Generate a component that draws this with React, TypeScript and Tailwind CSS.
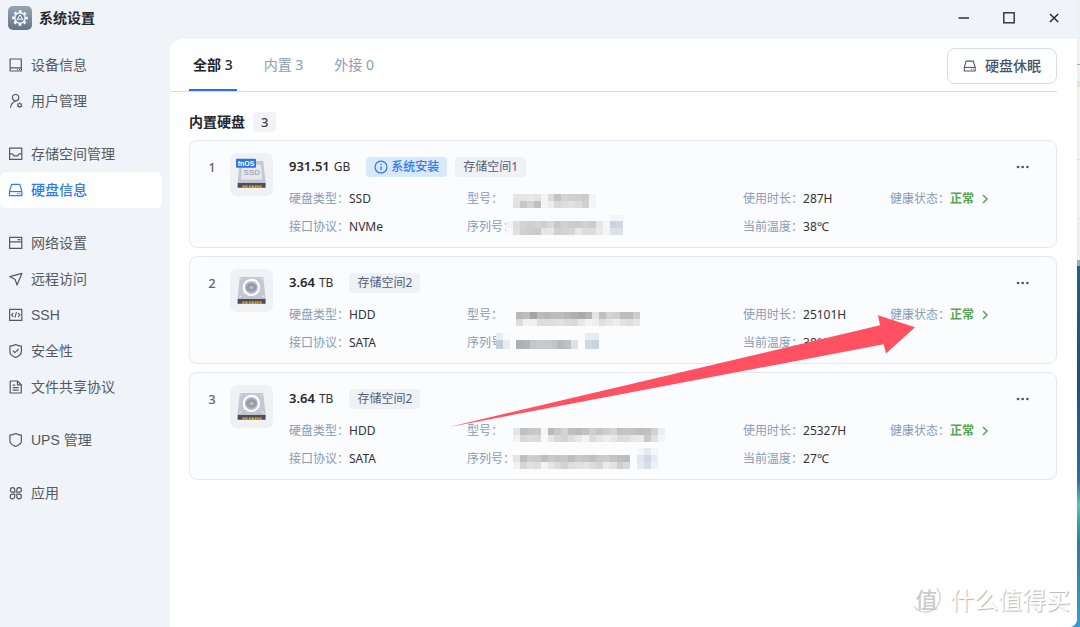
import type { ReactNode } from "react";

function Icon({ children, className = "size-4" }: { children: ReactNode; className?: string }) {
  return (
    <svg
      viewBox="0 0 16 16"
      className={`shrink-0 ${className}`}
      fill="none"
      stroke="currentColor"
      strokeWidth="1.2"
      strokeLinejoin="round"
      aria-hidden="true"
    >
      {children}
    </svg>
  );
}

const shieldPath = "M7.6 1.6 C9.4 2.6 11.5 3.1 13.4 3.1 V8.4 C13.4 11.3 11 13.2 7.6 14.4 C4.2 13.2 1.9 11.3 1.9 8.4 V3.1 C3.8 3.1 5.9 2.6 7.6 1.6Z";

const drivePaths = (
  <>
    <path d="M3.6 2.4H11.8L13.9 9.4V13.6H1.5V9.4Z" />
    <path d="M1.5 9.6H13.9" />
    <path d="M9.2 11.7H10.2M11.2 11.7H12.2" />
  </>
);

const icons: Record<string, ReactNode> = {
  device: (
    <>
      <rect x="2.1" y="2" width="11.2" height="12" />
      <path d="M2.1 10.9H13.3M9 12.5H10M11 12.5H12" />
    </>
  ),
  user: (
    <>
      <circle cx="7.6" cy="4.7" r="3.2" />
      <path d="M2.6 14.7C2.8 11.6 4.4 9.3 7.6 8.3" />
      <circle cx="11.6" cy="12.2" r="1.7" />
      <path d="M11.6 9.6V10.4M11.6 14V14.8M9.3 10.9L10 11.3M13.2 13.1L13.9 13.5M9.3 13.5L10 13.1M13.2 11.3L13.9 10.9" />
    </>
  ),
  storage: (
    <>
      <rect x="1.6" y="2.2" width="12.2" height="11.2" />
      <path d="M1.6 7.8H4.4L6 9.8H9.6L11.2 7.8H13.8" />
    </>
  ),
  drive: drivePaths,
  network: (
    <>
      <rect x="1.6" y="2.4" width="12.2" height="11" />
      <path d="M1.6 6.9H13.8M9.6 4.6H12.4" />
    </>
  ),
  remote: <path d="M1.8 5.6L13.9 2.4L9 14L7.2 8.6Z" />,
  ssh: (
    <>
      <rect x="1.6" y="2.4" width="12.2" height="11" />
      <path d="M5.3 6L3.5 7.9L5.3 9.8M10.1 6L11.9 7.9L10.1 9.8M8.5 5.2L6.9 10.6" strokeWidth="1.1" />
    </>
  ),
  security: (
    <>
      <path d={shieldPath} />
      <path d="M4.9 7.7L6.9 9.7L10.6 6" />
    </>
  ),
  files: (
    <>
      <path d="M2.2 2H9.4L13.3 5.8V14H2.2Z" />
      <path d="M9.4 2V5.8H13.3M4.7 6.2H7.2M4.7 8.7H10.7M4.7 11.2H10.7" />
    </>
  ),
  ups: <path d={shieldPath} />,
  apps: (
    <>
      <path d="M6.8 7.2H4.5A2.2 2.3 0 1 1 6.8 4.7ZM8.8 7.2V4.7A2.3 2.3 0 1 1 11.1 7.2Z" />
      <path d="M6.8 9.2V11.5A2.3 2.3 0 1 1 4.5 9.2ZM8.8 9.2H11.1A2.3 2.3 0 1 1 8.8 11.5Z" />
    </>
  ),
};

const navGroups = [
  [
    { icon: "device", label: "设备信息" },
    { icon: "user", label: "用户管理" },
  ],
  [
    { icon: "storage", label: "存储空间管理" },
    { icon: "drive", label: "硬盘信息", active: true },
  ],
  [
    { icon: "network", label: "网络设置" },
    { icon: "remote", label: "远程访问" },
    { icon: "ssh", label: "SSH" },
    { icon: "security", label: "安全性" },
    { icon: "files", label: "文件共享协议" },
  ],
  [{ icon: "ups", label: "UPS 管理" }],
  [{ icon: "apps", label: "应用" }],
];

type Strip = { x: number; y: number; h?: number; cells: string };

type Disk = {
  size: string;
  unit: string;
  system?: boolean;
  pool: string;
  kind: string;
  bus: string;
  hours: string;
  temp: string;
  mask: Strip[];
};

// Each cell is a two-digit hex grey, or a full six-digit colour.
const disks: Disk[] = [
  {
    size: "931.51", unit: "GB", system: true, pool: "存储空间1", kind: "SSD", bus: "NVMe", hours: "287H", temp: "38℃",
    mask: [
      { x: 46, y: 9, cells: "e5 e5 e8 e4 f4 dc c2 d3 d0 d0 cb f4" },
      { x: 46, y: 16, cells: "e1 c8 d4 c0 f5 ec d9 dd e0 dc d0 f6" },
      { x: 39, y: 36, cells: "f5 dd d3 cf d2 ce d8 c8 d0 cc cb d1 cc e6 f5 c9d1df d0d6e2" },
      { x: 39, y: 43, cells: "f8 e0 d0 cd ca e5 e7 d0 d3 d6 e8 dc dd e9 f4 dce2ec dae1ea" },
      { x: 143, y: 30, h: 6, cells: "f3f5f8 f3f5f8" },
    ],
  },
  {
    size: "3.64", unit: "TB", pool: "存储空间2", kind: "HDD", bus: "SATA", hours: "25101H", temp: "38℃",
    mask: [
      { x: 49, y: 11, cells: "b8 be a6 bb b6 bc bc b6 b0 aa b4 e5 bf d4 d0 bd bd cd" },
      { x: 49, y: 18, cells: "dd f1 f0 dd dd df e2 dc d9 e6 f3 ee e0 e7 ee e3 de e7" },
      { x: 49, y: 39, h: 9, cells: "b0 b4 c6 ca c9 c4 b9 c1 e1" },
      { x: 118, y: 32, cells: "e8edf4 e6ebf2" },
      { x: 118, y: 39, h: 9, cells: "cfd8e4 c8d2e0" },
      { x: 29, y: 32, cells: "e8edf3 f8f9fc" },
      { x: 29, y: 39, h: 9, cells: "c3ccda e8ecf3" },
    ],
  },
  {
    size: "3.64", unit: "TB", pool: "存储空间2", kind: "HDD", bus: "SATA", hours: "25327H", temp: "27℃",
    mask: [
      { x: 46, y: 11, cells: "e5 c0 c6 c9 f6 b8 c8 d3 bf ba c0 ce c5 ce d5 c2 c5 c3 bd c0 d2 ee" },
      { x: 46, y: 18, cells: "f1 d8 dd da f9 e6 d8 d4 dd e8 f3 dc e5 ee e7 dc de e7 ea c9 e1 f4" },
      { x: 46, y: 38, cells: "e4 bf cd cc c0 ca c6 c9 bd c9 c5 bf c9 cd c4 be bd" },
      { x: 46, y: 45, cells: "f1 d5 e1 dd f3 e6 dc d2 dd e1 e3 dc d5 ea e3 cf d9" },
      { x: 170, y: 31, cells: "f4f6f9 e5eaf1 f6f7fa" },
      { x: 170, y: 38, cells: "e1e6ef d2d9e6 e8ecf2" },
      { x: 170, y: 45, cells: "e6eaf1 d7deea eff2f6" },
    ],
  },
];

function Mask({ strips }: { strips: Strip[] }) {
  return (
    <svg viewBox="0 0 210 56" className="pointer-events-none absolute top-0 left-0 h-14 w-[210px]" shapeRendering="crispEdges" aria-hidden="true">
      {strips.map((s, i) =>
        s.cells.split(" ").map((c, k) => (
          <rect
            key={`${i}-${k}`}
            x={s.x + k * 6.9}
            y={s.y}
            width="6.95"
            height={s.h ?? 7}
            fill={c.length === 2 ? `#${c}${c}${c}` : `#${c}`}
          />
        )),
      )}
    </svg>
  );
}

function DiskPicture({ kind }: { kind: string }) {
  return (
    <svg viewBox="0 0 43 43" className="size-[43px] shrink-0" role="img" aria-label={kind}>
      <rect width="43" height="43" rx="7" fill="#f0f1f4" />
      <path d="M9.8 8H33.2L35.6 29.6H7.6Z" fill="#c5c8d2" />
      {kind === "SSD" ? (
        <>
          <path d="M12 11.5H31L32.2 26.5H11Z" fill="#e6e8ef" />
          <text x="21.8" y="21.6" textAnchor="middle" className="font-['Liberation_Sans',sans-serif] text-[8px] font-bold" fill="#a9aebc">
            SSD
          </text>
          <rect x="6" y="5.8" width="20" height="9" rx="1" fill="#2f74e0" />
          <text x="16" y="12.8" textAnchor="middle" className="font-['Liberation_Sans',sans-serif] text-[7px] font-bold" fill="#fff">
            fnOS
          </text>
        </>
      ) : (
        <>
          <circle cx="21.4" cy="18.4" r="7.6" fill="#b5b9c5" stroke="#fff" strokeWidth="2.2" />
          <ellipse cx="21.4" cy="18.4" rx="5.2" ry="4.4" fill="#9599a9" />
          <ellipse cx="21.6" cy="18.6" rx="2.2" ry="1.6" fill="#b9bcc8" />
          <path d="M13 24.8L17 23.2L15.2 22Z" fill="#fff" />
          <circle cx="11.4" cy="9.8" r=".7" fill="#eceef3" />
          <circle cx="31.6" cy="9.8" r=".7" fill="#eceef3" />
          <circle cx="10.2" cy="27.4" r=".8" fill="#eceef3" />
          <circle cx="33" cy="27.4" r=".8" fill="#eceef3" />
        </>
      )}
      <path d="M7.6 29.8H35.6V34.8H7.6Z" fill="#4b4f66" />
      <path d="M12.4 32.6H17.6V35H12.4ZM18.8 32.6H24V35H18.8ZM24.6 32.6H31.6V35H24.6Z" fill="#d9a520" />
      <path d="M14.8 32.6V35M21 32.6V35M27 32.6V35M29.4 32.6V35" stroke="#4b4f66" strokeWidth=".6" />
    </svg>
  );
}

function Field({ label, children }: { label: string; children?: ReactNode }) {
  return (
    <div className="flex h-7 items-center whitespace-nowrap">
      <dt className="text-[#8b9bb4]">{label}：</dt>
      <dd className="text-[#303236]">{children}</dd>
    </div>
  );
}

function DiskCard({ disk, index }: { disk: Disk; index: number }) {
  return (
    <li className="flex h-[108px] rounded-lg border border-[#e2e8f1] bg-[#fbfcfe] pt-3 pr-[15px] text-xs">
      <span className="mt-1 w-10 shrink-0 pl-1 text-center text-[13px] leading-5 font-medium text-[#5a6580]">
        {index}
      </span>
      <DiskPicture kind={disk.kind} />
      <div className="ml-4 min-w-0 flex-1 pt-1">
        <div className="flex h-5 items-center">
          <h3 className="flex items-baseline gap-1 text-[#303236]">
            <span className="text-[13px] font-semibold text-[#26282c]">{disk.size}</span>
            <span>{disk.unit}</span>
          </h3>
          <div className="ml-4 flex gap-2 leading-5">
            {disk.system && (
              <span className="flex items-center gap-[3px] rounded bg-[#d9e8fb] px-2 text-[#2f7bea]">
                <Icon className="size-[14px]">
                  <circle cx="8" cy="8" r="6.8" strokeWidth="1.4" />
                  <path d="M8 7V11.8M8 4.2V5.8" strokeWidth="1.5" />
                </Icon>
                <span className="font-medium">系统安装</span>
              </span>
            )}
            <span className="rounded bg-[#f0f1f4] px-2 text-[#525e78]">{disk.pool}</span>
          </div>
          <button type="button" aria-label="更多" className="ml-auto flex h-5 w-9 items-center justify-center text-[#4a5468]">
            <svg viewBox="0 0 14 4" className="h-1 w-[14px]" fill="currentColor" aria-hidden="true">
              <circle cx="2" cy="2" r="1.3" />
              <circle cx="6.7" cy="2" r="1.3" />
              <circle cx="11.4" cy="2" r="1.3" />
            </svg>
          </button>
        </div>
        <div className="mt-2 grid grid-cols-[178fr_276fr_147fr_151fr]">
          <dl>
            <Field label="硬盘类型">{disk.kind}</Field>
            <Field label="接口协议">{disk.bus}</Field>
          </dl>
          <dl className="relative">
            <Field label="型号" />
            <Field label="序列号" />
            <Mask strips={disk.mask} />
          </dl>
          <dl>
            <Field label="使用时长">{disk.hours}</Field>
            <Field label="当前温度">{disk.temp}</Field>
          </dl>
          <dl>
            <Field label="健康状态">
              <button type="button" className="flex items-center gap-[7px] font-bold text-[#56a556]">
                正常
                <svg viewBox="0 0 8 10" className="h-[10px] w-2" fill="none" stroke="currentColor" strokeWidth="1.5" aria-hidden="true">
                  <path d="M2 1L6 5L2 9" />
                </svg>
              </button>
            </Field>
          </dl>
        </div>
      </div>
    </li>
  );
}

function TitleBar() {
  return (
    <header className="flex h-[39px] items-center pr-px pb-[3px] pl-2">
      <svg viewBox="0 0 24 24" className="size-6" aria-hidden="true">
        <defs>
          <linearGradient id="app-bg" x1="0" y1="0" x2="0" y2="1">
            <stop offset="0" stopColor="#97a3b1" />
            <stop offset="1" stopColor="#64758a" />
          </linearGradient>
        </defs>
        <rect width="24" height="24" rx="5" fill="url(#app-bg)" />
        <circle cx="12" cy="12" r="6.8" fill="none" stroke="#fff" strokeWidth="2" strokeDasharray="2.7 2.64" strokeDashoffset="1.35" />
        <circle cx="12" cy="12" r="5.2" fill="#74849a" stroke="#fff" strokeWidth="1.4" />
        <path d="M12 8.6L8.9 14.2M12 8.6L15.1 14.2M9.6 13.2H14.4" stroke="#fff" strokeWidth="1" fill="none" />
      </svg>
      <h1 className="ml-[7px] text-sm font-bold text-[#24272c]">系统设置</h1>
      <div className="ml-auto flex text-[#2c2f35]">
        <button type="button" aria-label="最小化" className="flex h-8 w-[45px] items-center justify-center">
          <Icon><path d="M2.5 8H13" strokeWidth="1.5" /></Icon>
        </button>
        <button type="button" aria-label="最大化" className="flex h-8 w-[45px] items-center justify-center">
          <Icon><rect x="2.8" y="2.8" width="10.4" height="10" strokeWidth="1.4" strokeLinejoin="miter" /></Icon>
        </button>
        <button type="button" aria-label="关闭" className="flex h-8 w-[45px] items-center justify-center">
          <Icon><path d="M4 4L12.2 12M12.2 4L4 12" strokeWidth="1.6" /></Icon>
        </button>
      </div>
    </header>
  );
}

function Sidebar() {
  return (
    <nav className="flex w-[170px] shrink-0 flex-col gap-[17px] pt-2 pr-2 font-['Liberation_Sans','Noto_Sans_CJK_SC',sans-serif] text-sm text-[#555960]">
      {navGroups.map((group, g) => (
        <ul key={g}>
          {group.map((item) => (
            <li key={item.label}>
              <a
                href="#"
                aria-current={item.active ? "page" : undefined}
                className={`flex h-9 items-center gap-[7px] rounded-md pl-2 ${item.active ? "bg-white font-medium text-[#2f7bea]" : ""}`}
              >
                <Icon>{icons[item.icon]}</Icon>
                {item.label}
              </a>
            </li>
          ))}
        </ul>
      ))}
    </nav>
  );
}

function Desktop() {
  return (
    <div
      className="absolute inset-y-0 right-0 w-5 bg-[linear-gradient(#f1f1f1_64px,#7fbfa8_64px,#7fbfa8_65px,#f1f1f1_65px,#f1f1f1_81px,#e2e6c4_81px,#e2e6c4_87px,#f1f1f1_87px,#f1f1f1_159px,#d9dee3_159px,#d9dee3_160px,#f1f1f1_160px,#f1f1f1_218px,#d9dee3_218px,#d9dee3_219px,#efefef_219px,#efefef_260px,#8fb0bd_260px,#8fb0bd_266px,#1f6380_266px,#1e4f80_380px,#2670a8_480px,#5cc4b4_505px,#2fa0ac_524px,#2c7ca0_545px,#3a9bd2_627px)]"
      aria-hidden="true"
    />
  );
}

function Watermark() {
  return (
    <div className="pointer-events-none absolute right-[7px] bottom-[9px] flex items-center gap-[5px] text-2xl leading-9 text-white [text-shadow:1px_1px_1px_#b4b4b4]">
      <svg viewBox="0 0 36 36" className="size-9 overflow-visible" aria-hidden="true">
        <path d="M28 6.5A14.6 14.6 0 1 1 5 24.5" fill="none" stroke="#cdcdcd" strokeWidth="1.2" />
        <text
          x="17.5"
          y="26"
          textAnchor="middle"
          className="font-['Noto_Sans_CJK_SC',sans-serif] text-[22px] font-medium [text-shadow:none]"
          fill="#cbcbcb"
        >
          值
        </text>
      </svg>
      <span>什么值得买</span>
    </div>
  );
}

export default function App() {
  return (
    <div className="relative flex min-h-screen pr-[3px] font-['Noto_Sans','Noto_Sans_CJK_SC',sans-serif]">
      <Desktop />
      <div className="relative flex min-w-0 flex-1 flex-col overflow-hidden rounded-r-lg bg-[#f0f3f8]">
        <TitleBar />
        <div className="flex flex-1">
          <Sidebar />
          <main className="min-w-0 flex-1 rounded-tl-xl bg-white pr-5">
            <div className="flex h-[53px] items-center border-b border-[#d5dee8] pl-[19px]">
              <div role="tablist" className="flex gap-[23px] self-stretch text-sm text-[#8b9bb4]">
                <button type="button" role="tab" aria-selected="true" className="border-b-2 border-[#2673dd] px-1 pt-0.5 font-bold text-[#24272c]">
                  全部 <span className="font-medium">3</span>
                </button>
                <button type="button" role="tab" aria-selected="false" className="border-b-2 border-transparent px-1 pt-0.5">
                  内置 3
                </button>
                <button type="button" role="tab" aria-selected="false" className="border-b-2 border-transparent px-1 pt-0.5">
                  外接 0
                </button>
              </div>
              <button
                type="button"
                className="mt-0.5 ml-auto flex h-9 items-center gap-2 rounded-lg border border-[#d3dce9] px-[15px] text-sm font-medium text-[#4a5468]"
              >
                <Icon className="size-[14px]">{drivePaths}</Icon>
                硬盘休眠
              </button>
            </div>
            <section className="pt-5 pl-[19px]">
              <h2 className="flex h-5 items-center gap-2 text-sm font-bold text-[#24272c]">
                内置硬盘
                <span className="rounded bg-[#f2f3f6] px-2 text-[13px] leading-5 font-medium text-[#3c4048]">3</span>
              </h2>
              <ul className="mt-2 flex flex-col gap-2">
                {disks.map((disk, i) => (
                  <DiskCard key={i} disk={disk} index={i + 1} />
                ))}
              </ul>
            </section>
          </main>
        </div>
        <svg viewBox="0 0 468 114" className="pointer-events-none absolute top-[314px] left-[448px] h-[114px] w-[468px]" aria-hidden="true">
          <path d="M1 113L432 11.3L430 1.3L467 13.3L438 39.6L435.7 30.3Z" fill="#ff5161" />
        </svg>
        <Watermark />
      </div>
    </div>
  );
}
